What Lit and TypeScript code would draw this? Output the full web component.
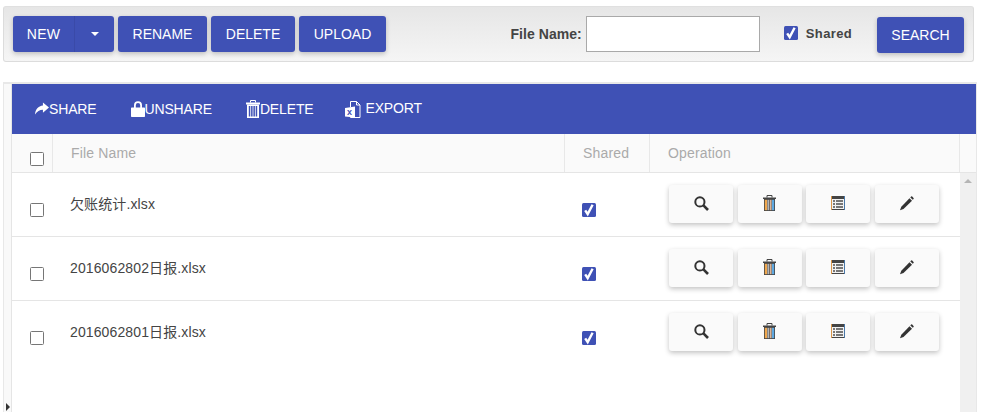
import { LitElement, html, css, svg } from "lit";
import { customElement } from "lit/decorators.js";

const icons = {
  share: svg`<svg width="14" height="14" viewBox="0 0 15 14"><path fill="#fff" d="M8.500 0L15 5.500 8.500 11V7.700C5 7.700 2.200 9.300 0 13c.3-5.500 3.500-9 8.500-9.700z"/></svg>`,
  lock: svg`<svg width="14" height="16" viewBox="0 0 14 16"><path fill="#fff" fill-rule="evenodd" d="M3 6.500V4.200a4 4 0 0 1 8 0v2.300h2.300a.7.7 0 0 1 .7.700v8.100a.7.7 0 0 1-.7.700H.7a.7.7 0 0 1-.7-.7V7.200a.7.7 0 0 1 .7-.7zm1.800 0h4.400V4.200a2.200 2.200 0 0 0-4.400 0z"/></svg>`,
  trashW: svg`<svg width="14" height="18" viewBox="0 0 14 18"><path fill="none" stroke="#fff" d="M4.500 2.500V.5h5v2"/><path fill="#fff" d="M0 2.500h14V4.500H0z"/><path fill="#fff" fill-rule="evenodd" d="M1 4.500h12V18H1zM2.800 6V16.500h1.500V6zm2.300 0V16.500h1.500V6zm2.300 0V16.500h1.500V6zm2.300 0V16.500h1.500V6z"/></svg>`,
  excel: svg`<svg width="16" height="17" viewBox="0 0 16 17"><path fill="none" stroke="#fff" d="M5.500 6V.5h6l3.500 3.500v12.500H5.500V15"/><path fill="none" stroke="#fff" d="M11.500.5v3.500H15"/><path fill="#fff" d="M0 7l10-1.500v11L0 15.500z"/><text x="2" y="14" font-family="Liberation Sans" font-size="9" font-weight="700" fill="#3f51b5">x</text></svg>`,
  search: svg`<svg width="15" height="15" viewBox="0 0 15 15"><circle cx="5.900" cy="5.900" r="4.600" fill="none" stroke="#333" stroke-width="2"/><path stroke="#333" stroke-width="2.600" d="M9.200 9.200l4.800 4.800"/></svg>`,
  trashD: svg`<svg width="13" height="16" viewBox="0 0 13 16"><path fill="none" stroke="#444" d="M4 2.500V.5h5v2"/><path fill="#444" d="M0 2.500h13v1.500H0zM1 4h11v12H1z"/><path fill="#f0a84e" d="M1.800 4.800h2.200v10.400H1.800z"/><path fill="#b4b4b4" d="M4.400 4.800h1.800v10.400H4.400z"/><path fill="#d8b49a" d="M6.800 4.800h1.800v10.400H6.800z"/><path fill="#5fa8e0" d="M9 4.800h2.200v10.400H9z"/></svg>`,
  list: svg`<svg width="14" height="14" viewBox="0 0 14 14"><path fill="#d9964a" d="M0 0h1v14H0z"/><path fill="#4a78a8" d="M13 0h1v14h-1z"/><path fill="#444" d="M1 0h12v3H1zM1 13h12v1H1z"/><path fill="#f2f2f2" d="M1 3h12v10H1z"/><path fill="#777" d="M2 4h2v2H2zm3 0h7v2H5zM2 7h2v2H2zm3 0h7v2H5zM2 10h2v2H2zm3 0h7v2H5z"/></svg>`,
  pencil: svg`<svg width="15" height="15" viewBox="0 0 15 15"><path fill="#333" d="M10.500 2.200l2.500 2.500-8.500 8.300L1 14.300 2.300 10.700z"/><path fill="#333" d="M11.300 1.400l.8-.8a.8.8 0 0 1 1.100 0l1.300 1.300a.8.8 0 0 1 0 1.100l-.7.800z"/></svg>`,
};

@customElement("app-root")
export class AppRoot extends LitElement {
  static styles = css`
    :host { display: block; height: 412px; overflow: hidden; background: #fff; font-family: "Liberation Sans", Arial, sans-serif; font-size: 14px; color: #444; }
    .page { padding: 6px 11px 0 3px; display: flex; flex-direction: column; gap: 20px; }
    button { font: inherit; border: 0; cursor: pointer; }
    .bar { box-sizing: border-box; width: 971px; height: 56px; margin-right: 3px; padding: 9px 9px 0; display: flex; align-items: flex-start; border: 1px solid #dcdcdc; border-top-color: #e0e0e0; border-radius: 3px; background: linear-gradient(#e6e6e6, #f5f5f5); }
    .btn { height: 36px; padding: 0; background: #3f51b5; color: #fff; border-radius: 3px; box-shadow: 0 2px 5px rgba(0,0,0,.22); }
    .group { display: flex; margin-right: 4px; border-radius: 3px; box-shadow: 0 2px 5px rgba(0,0,0,.22); }
    .group .btn { box-shadow: none; }
    .new { width: 62px; border-radius: 3px 0 0 3px; border-right: 1px solid #3a4aa8; letter-spacing: .3px; }
    .caret { width: 39px; border-radius: 0 3px 3px 0; display: flex; align-items: center; justify-content: center; }
    .caret i { border: 4px solid transparent; border-top-color: #fff; border-bottom: 0; }
    .rename { width: 89px; margin-right: 4px; }
    .delete { width: 84px; margin-right: 4px; }
    .upload { width: 87px; }
    .spacer { flex: 1; }
    .label { font-weight: 700; line-height: 36px; margin-right: 4px; letter-spacing: .05px; }
    input[type=text] { box-sizing: border-box; width: 174px; height: 36px; margin: 0 24px 0 0; border: 1px solid #a9a9a9; background: #fff; padding: 0 4px; outline: none; }
    .cb { appearance: none; -webkit-appearance: none; box-sizing: border-box; width: 14px; height: 14px; margin: 0; display: block; border: 1px solid #767676; border-radius: 1.500px; background: #fff; flex: none; }
    .on { display: block; width: 14px; height: 14px; border-radius: 1.500px; background: #3f51b5; flex: none; }
    .on svg { display: block; }
    .shared { display: flex; align-items: center; height: 36px; margin-right: 25px; gap: 8px; font-weight: 700; color: #444; font-size: 13px; letter-spacing: .35px; }
    .shared span { position: relative; top: -1px; }
    .search { width: 87px; margin-top: 1px; }
    .grid { display: flex; height: 330px; border-top: 2px solid #e8e8e8; width: 974px; box-sizing: border-box; }
    .strip { box-sizing: border-box; width: 9px; border-left: 1px solid #e8e8e8; border-right: 1px solid #e5e5e5; background: #f9f9f9; display: flex; flex-direction: column; justify-content: flex-end; align-items: flex-start; padding: 0 0 1px 2px; }
    .strip i { border-left: 4px solid #333; border-top: 4px solid transparent; border-bottom: 4px solid transparent; }
    .main { flex: 1; display: flex; flex-direction: column; border-right: 1px solid #e8e8e8; min-width: 0; width: 965px; }
    .tools { height: 50px; flex: none; background: #3f51b5; color: #fff; display: flex; align-items: center; padding-left: 23px; }
    .tool { display: flex; align-items: center; background: none; color: #fff; padding: 0; margin-right: 34px; height: 50px; letter-spacing: -.15px; }
    .tool.d { margin-right: 32px; }
    .tool.x { gap: 4px; margin-top: -2px; }
    .tool.x svg { margin-top: 2px; }
    .head { height: 39px; flex: none; box-sizing: border-box; display: flex; background: #fafafa; border-bottom: 1px solid #e5e5e5; color: #aaa; letter-spacing: .17px; }
    .head > div { box-sizing: border-box; border-right: 1px solid #e8e8e8; display: flex; align-items: center; padding-bottom: 1px; }
    .c0 { width: 41px; flex: none; display: flex; box-sizing: border-box; padding-left: 18px; }
    .head .c0 { align-items: flex-start; padding-top: 18px; }
    .c1 { width: 512px; flex: none; box-sizing: border-box; padding-left: 18px; }
    .c2 { width: 85px; flex: none; box-sizing: border-box; padding-left: 18px; }
    .c3 { width: 310px; flex: none; box-sizing: border-box; padding-left: 18px; }
    .c4 { flex: 1; }
    .head > .c4 { border-right: 0; }
    .body { flex: 1; display: flex; min-height: 0; }
    .rows { width: 948px; flex: none; }
    .row { height: 64px; box-sizing: border-box; border-bottom: 1px solid #e5e5e5; display: flex; }
    .row:last-child { border-bottom: 0; }
    .row .c0 { padding-top: 30px; }
    .row .c1 { padding: 21px 0 0 17px; line-height: 20px; color: #444; font-family: "Liberation Sans", "Noto Sans CJK SC", sans-serif; font-size: 14px; letter-spacing: .12px; }
    .row .c2 { width: 86px; padding: 30px 0 0 17px; }
    .ops { display: flex; gap: 4.670px; padding: 12px 0 0 18px; }
    .op { width: 64px; height: 38px; padding: 0 0 2px; border-radius: 3px; background: #fafafa; display: flex; align-items: center; justify-content: center; box-shadow: 0 2px 5px rgba(0,0,0,.24); }
    .scroll { width: 16px; flex: none; background: #f0f0f0; display: flex; justify-content: center; padding-top: 6px; box-sizing: border-box; }
    .scroll i { width: 0; height: 0; border: 4px solid transparent; border-bottom: 4px solid #b5b5b5; border-top: 0; }
  `;

  private check() {
    return html`<span class="on"><svg width="14" height="14" viewBox="0 0 14 14"><path fill="none" stroke="#fff" stroke-width="2.400" d="M3.200 7.300l2.500 3.800L10.600 1.800"/></svg></span>`;
  }

  render() {
    const files = ["欠账统计.xlsx", "2016062802日报.xlsx", "2016062801日报.xlsx"];
    return html`<div class="page">
      <div class="bar">
        <div class="group"><button class="btn new">NEW</button><button class="btn caret" aria-label="more"><i></i></button></div>
        <button class="btn rename">RENAME</button>
        <button class="btn delete">DELETE</button>
        <button class="btn upload">UPLOAD</button>
        <div class="spacer"></div>
        <span class="label">File Name:</span>
        <input type="text" />
        <div class="shared">${this.check()}<span>Shared</span></div>
        <button class="btn search">SEARCH</button>
      </div>
      <div class="grid">
        <div class="strip"><i></i></div>
        <div class="main">
          <div class="tools">
            <button class="tool">${icons.share}SHARE</button>
            <button class="tool">${icons.lock}UNSHARE</button>
            <button class="tool d">${icons.trashW}DELETE</button>
            <button class="tool x">${icons.excel}EXPORT</button>
          </div>
          <div class="head">
            <div class="c0"><input class="cb" type="checkbox" /></div>
            <div class="c1">File Name</div>
            <div class="c2">Shared</div>
            <div class="c3">Operation</div>
            <div class="c4"></div>
          </div>
          <div class="body">
            <div class="rows">
              ${files.map((f) => html`<div class="row">
                <div class="c0"><input class="cb" type="checkbox" /></div>
                <div class="c1">${f}</div>
                <div class="c2">${this.check()}</div>
                <div class="ops">
                  <button class="op">${icons.search}</button>
                  <button class="op">${icons.trashD}</button>
                  <button class="op">${icons.list}</button>
                  <button class="op">${icons.pencil}</button>
                </div>
              </div>`)}
            </div>
            <div class="scroll"><i></i></div>
          </div>
        </div>
      </div>
    </div>`;
  }
}
